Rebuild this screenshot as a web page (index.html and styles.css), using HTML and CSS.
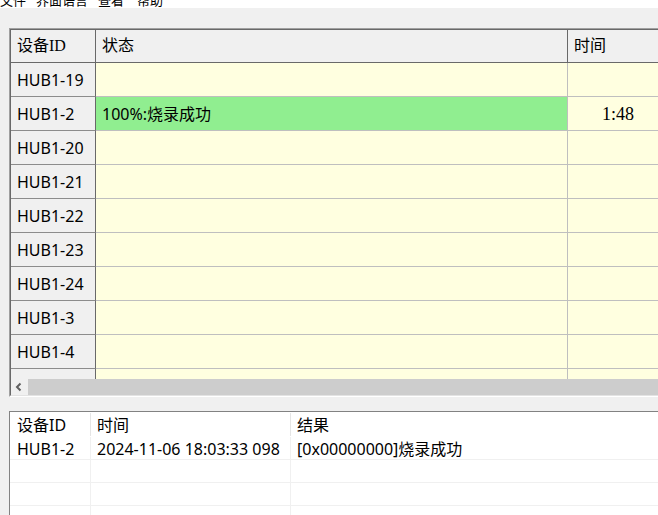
FILE: index.html
```html
<!DOCTYPE html>
<html lang="zh-CN">
<head>
<meta charset="utf-8">
<title>烧录</title>
<link rel="stylesheet" href="styles.css">
</head>
<body>
<div class="menubar">
  <div class="menu-items">
    <span>文件</span><span>界面语言</span><span>查看</span><span class="last">帮助</span>
  </div>
</div>

<div class="upper">
  <div class="upper-inner">
    <div class="grid-clip">
      <div class="grid">
        <div class="hd c1">设备ID</div><div class="hd c2">状态</div><div class="hd c3">时间</div>
        <div class="rh">HUB1-19</div><div class="cell"></div><div class="cell"></div>
        <div class="rh">HUB1-2</div><div class="cell ok">100%:烧录成功</div><div class="cell t">1:48</div>
        <div class="rh">HUB1-20</div><div class="cell"></div><div class="cell"></div>
        <div class="rh">HUB1-21</div><div class="cell"></div><div class="cell"></div>
        <div class="rh">HUB1-22</div><div class="cell"></div><div class="cell"></div>
        <div class="rh">HUB1-23</div><div class="cell"></div><div class="cell"></div>
        <div class="rh">HUB1-24</div><div class="cell"></div><div class="cell"></div>
        <div class="rh">HUB1-3</div><div class="cell"></div><div class="cell"></div>
        <div class="rh">HUB1-4</div><div class="cell"></div><div class="cell"></div>
        <div class="rh">HUB1-5</div><div class="cell"></div><div class="cell"></div>
      </div>
    </div>
    <div class="hscroll">
      <div class="sb-btn">
        <svg width="16" height="16" viewBox="0 0 16 16"><polyline points="9.5,4.5 6,8 9.5,11.5" fill="none" stroke="#606060" stroke-width="2"/></svg>
      </div>
      <div class="sb-thumb"></div>
    </div>
  </div>
</div>

<div class="lower">
  <div class="lhead">
    <div class="lh l1">设备ID</div><div class="lh l2">时间</div><div class="lh l3">结果</div>
  </div>
  <div class="lrow">
    <div class="lc l1">HUB1-2</div><div class="lc l2">2024-11-06 18:03:33 098</div><div class="lc l3">[0x00000000]烧录成功</div>
  </div>
  <div class="lrow">
    <div class="lc l1"></div><div class="lc l2"></div><div class="lc l3"></div>
  </div>
  <div class="lrow">
    <div class="lc l1"></div><div class="lc l2"></div><div class="lc l3"></div>
  </div>
  <div class="lrow">
    <div class="lc l1"></div><div class="lc l2"></div><div class="lc l3"></div>
  </div>
</div>
</body>
</html>
```

FILE: styles.css
```css
html, body {
  margin: 0;
  padding: 0;
}
body {
  width: 658px;
  height: 515px;
  overflow: hidden;
  background: #f0f0f0;
  font-family: "Noto Sans", "Noto Sans CJK SC", sans-serif;
  color: #000;
}

.menubar {
  height: 8px;
  background: #fff;
  overflow: hidden;
}
.menu-items {
  display: flex;
  gap: 10px;
  margin-top: -7px;
  font-size: 13px;
  line-height: 13px;
  font-family: "Noto Sans CJK SC", sans-serif;
}
.menu-items .last {
  margin-left: 3px;
}

/* upper data grid */
.upper {
  margin: 20px 0 0 9px;
  width: 720px;
  border-top: 1px solid #a0a0a0;
  border-left: 1px solid #a0a0a0;
  border-bottom: 1px solid #ffffff;
}
.upper-inner {
  border-top: 1px solid #696969;
  border-left: 1px solid #696969;
  border-bottom: 1px solid #e3e3e3;
}
.grid-clip {
  height: 349px;
  overflow: hidden;
  background: #ffffe0;
}
.grid {
  display: grid;
  grid-template-columns: 85px 472px 101px;
  grid-auto-rows: 34px;
  grid-template-rows: 33px;
  font-size: 16px;
  line-height: 1;
}
.hd {
  background: #f0f0f0;
  border-right: 1px solid #696969;
  border-bottom: 1px solid #696969;
  display: flex;
  align-items: center;
  padding-left: 6px;
  font-family: "Liberation Serif", "Noto Sans CJK SC", serif;
}
.rh {
  background: #f0f0f0;
  border-right: 1px solid #696969;
  border-bottom: 1px solid #8c8c8c;
  display: flex;
  align-items: center;
  padding-left: 6px;
  padding-top: 1px;
}
.cell {
  background: #ffffe0;
  border-right: 1px solid #bfbfbf;
  border-bottom: 1px solid #bfbfbf;
  display: flex;
  align-items: center;
  padding-left: 6px;
  padding-top: 1px;
}
.cell.ok {
  background: #90ee90;
}
.cell.t {
  justify-content: center;
  padding-left: 0;
  font-family: "Liberation Serif", serif;
  font-size: 18px;
}

.hscroll {
  height: 16px;
  display: flex;
  background: #f0f0f0;
}
.sb-btn {
  width: 17px;
  height: 16px;
  background: #f0f0f0;
}
.sb-btn svg {
  display: block;
}
.sb-thumb {
  flex: 1;
  background: #cdcdcd;
}

/* lower list view */
.lower {
  margin: 14px 0 0 9px;
  width: 720px;
  height: 200px;
  background: #fff;
  border-top: 1px solid #828282;
  border-left: 1px solid #828282;
  font-size: 16px;
  line-height: 1;
}
.lhead, .lrow {
  display: grid;
  grid-template-columns: 81px 200px 400px;
}
.lhead {
  height: 25px;
}
.lh {
  position: relative;
  display: flex;
  align-items: center;
  padding-left: 7px;
}
.lh.l1::after, .lh.l2::after {
  content: "";
  position: absolute;
  right: 0;
  top: 1px;
  bottom: 1px;
  width: 1px;
  background: #e5e5e5;
}
.lh.l2, .lc.l2, .lh.l3, .lc.l3 {
  padding-left: 6px;
}
.lrow {
  height: 23px;
}
.lc {
  display: flex;
  align-items: center;
  padding-left: 7px;
  padding-top: 1px;
  border-bottom: 1px solid #f0f0f0;
  border-right: 1px solid #f0f0f0;
}
```
